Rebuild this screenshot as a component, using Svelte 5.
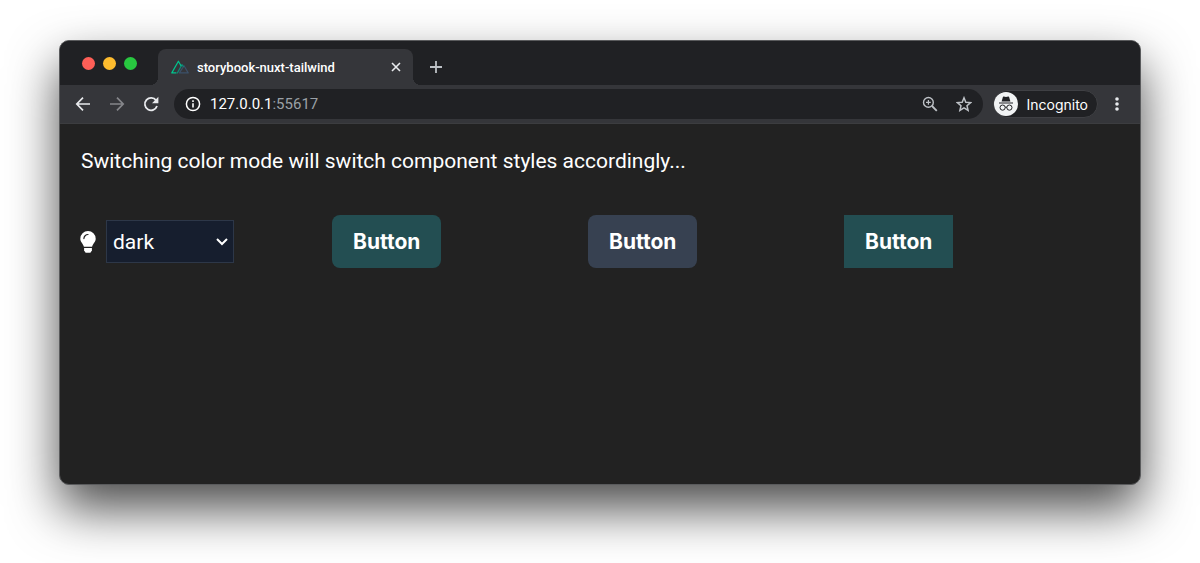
<script lang="ts">
  let mode = $state("dark");

  const modes = ["system", "light", "dark", "sepia"];

  const buttons = [
    { variant: "primary", label: "Button" },
    { variant: "secondary", label: "Button" },
    { variant: "square", label: "Button" },
  ];
</script>

<div class="desktop">
  <div class="window">
    <header class="tab-strip">
      <div class="traffic-lights">
        <button class="light close" type="button" aria-label="Close window"></button>
        <button class="light minimize" type="button" aria-label="Minimize window"></button>
        <button class="light maximize" type="button" aria-label="Maximize window"></button>
      </div>
      <div class="tab">
        <svg class="favicon" viewBox="0 0 18 14" fill="none" stroke-width="1.2" stroke-linejoin="round" stroke-linecap="round">
          <path d="M8.4 12.9 13 5.7l4.2 7.2z" stroke="#3b5069" />
          <path d="M6.4 12.9 11 4.6l1.4 2" stroke="#108775" />
          <path d="M5 12.9H.8L7.4 1.2l2.6 4.6" stroke="#00c58e" />
        </svg>
        <span class="tab-title">storybook-nuxt-tailwind</span>
        <button class="icon-btn tab-close" type="button" aria-label="Close tab">
          <svg viewBox="0 0 10 10" fill="none" stroke="currentColor" stroke-width="1.6">
            <path d="m1 1 8 8M9 1 1 9" />
          </svg>
        </button>
      </div>
      <button class="icon-btn new-tab" type="button" aria-label="New tab">
        <svg viewBox="0 0 14 14" fill="none" stroke="currentColor" stroke-width="1.8">
          <path d="M7 1v12M1 7h12" />
        </svg>
      </button>
    </header>

    <nav class="toolbar">
      <div class="nav-buttons">
        <button class="icon-btn" type="button" aria-label="Back">
          <svg viewBox="0 0 16 16" fill="none" stroke="currentColor" stroke-width="1.7">
            <path d="M15 8H2M8 1.7 1.8 8 8 14.3" />
          </svg>
        </button>
        <button class="icon-btn" type="button" aria-label="Forward" disabled>
          <svg viewBox="0 0 16 16" fill="none" stroke="currentColor" stroke-width="1.7">
            <path d="M1 8h13M8 1.7 14.2 8 8 14.3" />
          </svg>
        </button>
        <button class="icon-btn" type="button" aria-label="Reload">
          <svg viewBox="0 0 16 16">
            <path d="M13.1 4.4A6.2 6.2 0 1 0 14 10" fill="none" stroke="currentColor" stroke-width="1.8" />
            <path d="M15.4.8v6.4H9z" fill="currentColor" />
          </svg>
        </button>
      </div>

      <div class="address-bar">
        <svg class="info" viewBox="0 0 16 16" fill="none" stroke="currentColor">
          <circle cx="8" cy="8" r="6.6" stroke-width="1.5" />
          <path d="M8 7.2v4.2M8 4.3V6" stroke-width="1.6" />
        </svg>
        <span class="url">127.0.0.1<span class="port">:55617</span></span>
        <button class="icon-btn action" type="button" aria-label="Zoom">
          <svg viewBox="0 0 16 16" fill="none" stroke="currentColor">
            <circle cx="6.4" cy="6.4" r="4.9" stroke-width="1.4" />
            <path d="M6.4 4v4.8M4 6.4h4.8" stroke-width="1.2" />
            <path d="m10 10 4.8 4.8" stroke-width="1.8" />
          </svg>
        </button>
        <button class="icon-btn action" type="button" aria-label="Bookmark this tab">
          <svg viewBox="0 0 16 16" fill="none" stroke="currentColor" stroke-width="1.5">
            <path d="m8 1.8 1.8 4.4 4.8.4L11 9.7l1.1 4.7L8 11.9l-4.1 2.5L5 9.7 1.4 6.6l4.8-.4z" />
          </svg>
        </button>
      </div>

      <div class="incognito">
        <svg viewBox="0 0 24 24">
          <circle cx="12" cy="12" r="12" fill="#f1f3f4" />
          <path d="M8.9 5.1q.2-.7.9-.5l2.2.5 2.2-.5q.7-.2.9.5l1.3 4.3H7.6z" fill="#202124" />
          <path d="M5 10.4h14v1H5z" fill="#202124" />
          <g fill="none" stroke="#202124">
            <circle cx="8.6" cy="15.6" r="2.6" />
            <circle cx="15.4" cy="15.6" r="2.6" />
            <path d="M11.2 15.3q.8-.5 1.6 0" />
          </g>
        </svg>
        <span>Incognito</span>
      </div>

      <button class="icon-btn menu" type="button" aria-label="Browser menu">
        <svg viewBox="0 0 16 16" fill="currentColor">
          <circle cx="8" cy="3" r="1.8" />
          <circle cx="8" cy="8" r="1.8" />
          <circle cx="8" cy="13" r="1.8" />
        </svg>
      </button>
    </nav>

    <main class="page">
      <p class="intro">Switching color mode will switch component styles accordingly...</p>

      <div class="showcase">
        <div class="color-mode">
          <label for="color-mode" aria-label="Color mode">
            <svg viewBox="0 0 16 22">
              <path d="M8 0a7.7 7.7 0 0 1 7.7 7.7c0 3.5-2.9 4.7-3.6 8.1H3.9C3.2 12.4.3 11.2.3 7.7A7.7 7.7 0 0 1 8 0z" fill="#fff" />
              <path d="M3.9 7.6A4.1 4.1 0 0 1 8 3.5" fill="none" stroke="#222" stroke-width="1.2" stroke-linecap="round" />
              <path d="M4.1 16.9h7.8v2.5l-1.5 2.3H5.6l-1.5-2.3z" fill="#fff" />
            </svg>
          </label>
          <div class="select-wrap">
            <select id="color-mode" bind:value={mode}>
              {#each modes as option}
                <option value={option}>{option}</option>
              {/each}
            </select>
            <svg class="chevron" viewBox="0 0 12 8" fill="none" stroke="#fff" stroke-width="2">
              <path d="m1 1 5 5 5-5" />
            </svg>
          </div>
        </div>

        {#each buttons as button}
          <div>
            <button class="btn {button.variant}" type="button">{button.label}</button>
          </div>
        {/each}
      </div>
    </main>
  </div>
</div>

<style>
  :global(body) {
    margin: 0;
    background: #fff;
  }

  .desktop {
    display: flex;
    box-sizing: border-box;
    min-height: 100vh;
    padding: 40px 59px 78px;
    overflow: hidden;
    font-family: Inter, "Liberation Sans", sans-serif;
    color: #fff;
  }

  .window {
    display: flex;
    flex: 1;
    flex-direction: column;
    min-width: 0;
    overflow: hidden;
    border: 1px solid #5a5b5d;
    border-radius: 10px;
    background: #222;
    box-shadow: 0 24px 50px rgba(0, 0, 0, 0.7);
  }

  button {
    padding: 0;
    border: none;
    font-family: inherit;
    cursor: pointer;
  }

  svg {
    display: block;
    flex-shrink: 0;
  }

  .tab-strip {
    display: flex;
    align-items: flex-end;
    height: 44px;
    background: #202124;
  }

  .traffic-lights {
    display: flex;
    align-self: center;
    gap: 8px;
    padding: 0 21px 0 22px;
  }

  .light {
    width: 13px;
    height: 13px;
    border-radius: 50%;
  }

  .close {
    background: #ff5f57;
  }

  .minimize {
    background: #febc2e;
  }

  .maximize {
    background: #28c840;
  }

  .tab {
    position: relative;
    display: flex;
    align-items: center;
    box-sizing: border-box;
    width: 255px;
    height: 36px;
    padding: 0 12px 0 13px;
    border-radius: 8px 8px 0 0;
    background: #35363a;
  }

  /* Flared corners where the tab meets the toolbar */
  .tab::before,
  .tab::after {
    content: "";
    position: absolute;
    bottom: 0;
    width: 8px;
    height: 8px;
  }

  .tab::before {
    right: 100%;
    background: radial-gradient(circle at 0 0, transparent 8px, #35363a 8px);
  }

  .tab::after {
    left: 100%;
    background: radial-gradient(circle at 100% 0, transparent 8px, #35363a 8px);
  }

  .favicon {
    width: 18px;
    height: 14px;
  }

  .tab-title {
    flex: 1;
    margin-left: 8px;
    font-family: Roboto, "Liberation Sans", sans-serif;
    font-size: 13px;
    font-weight: 500;
    white-space: nowrap;
  }

  .icon-btn {
    display: flex;
    align-items: center;
    justify-content: center;
    background: transparent;
    color: #e8eaed;
  }

  .icon-btn svg {
    width: 16px;
    height: 16px;
  }

  .icon-btn:disabled {
    color: #85868a;
    cursor: default;
  }

  .tab-close svg {
    width: 10px;
    height: 10px;
  }

  .new-tab {
    height: 36px;
    margin-left: 16px;
    color: #bdc1c6;
  }

  .new-tab svg {
    width: 14px;
    height: 14px;
  }

  .toolbar {
    display: flex;
    align-items: center;
    height: 38px;
    padding: 0 15px;
    border-bottom: 1px solid #3c3d40;
    background: #35363a;
  }

  .nav-buttons {
    display: flex;
    gap: 18px;
  }

  .address-bar {
    display: flex;
    flex: 1;
    align-items: center;
    height: 30px;
    margin: 0 10px 0 15px;
    padding: 0 11px;
    border-radius: 15px;
    background: #202124;
  }

  .info {
    width: 16px;
    height: 16px;
  }

  .url {
    flex: 1;
    margin-left: 9px;
    font-family: Roboto, "Liberation Sans", sans-serif;
    font-size: 15px;
  }

  .port {
    color: #9aa0a6;
  }

  .action {
    margin-left: 18px;
    color: #bdc1c6;
  }

  .incognito {
    display: flex;
    align-items: center;
    gap: 8px;
    box-sizing: border-box;
    height: 28px;
    padding: 0 9px 0 0;
    border: 1px solid #3f4044;
    border-radius: 14px;
    background: #202124;
    font-size: 14px;
  }

  .incognito svg {
    width: 24px;
    height: 24px;
  }

  .menu {
    margin-left: 11px;
  }

  .page {
    flex: 1;
    padding: 24px 40px 24px 16px;
  }

  .intro {
    margin: 0 0 40px;
    padding-left: 5px;
    font-family: Roboto, "Liberation Sans", sans-serif;
    font-size: 21px;
    line-height: 27px;
  }

  .showcase {
    display: grid;
    grid-template-columns: repeat(4, 1fr);
    align-items: center;
  }

  .color-mode {
    display: flex;
    align-items: center;
    gap: 10px;
    padding-left: 4px;
  }

  .color-mode label svg {
    width: 16px;
    height: 22px;
  }

  .select-wrap {
    position: relative;
  }

  select {
    display: block;
    box-sizing: border-box;
    width: 128px;
    height: 43px;
    padding: 0 24px 0 6px;
    appearance: none;
    border: 1px solid #2d3748;
    border-radius: 0;
    background: #161e2e;
    color: #fff;
    font-family: Roboto, "Liberation Sans", sans-serif;
    font-size: 21px;
  }

  .chevron {
    position: absolute;
    top: 18px;
    right: 6px;
    width: 12px;
    height: 8px;
    pointer-events: none;
  }

  .btn {
    display: block;
    height: 53px;
    padding: 0 21px;
    border-radius: 8px;
    color: #fff;
    font-size: 21px;
    font-weight: 700;
  }

  .primary,
  .square {
    background: #234e52;
  }

  .secondary {
    background: #374151;
  }

  .square {
    border-radius: 0;
  }
</style>
